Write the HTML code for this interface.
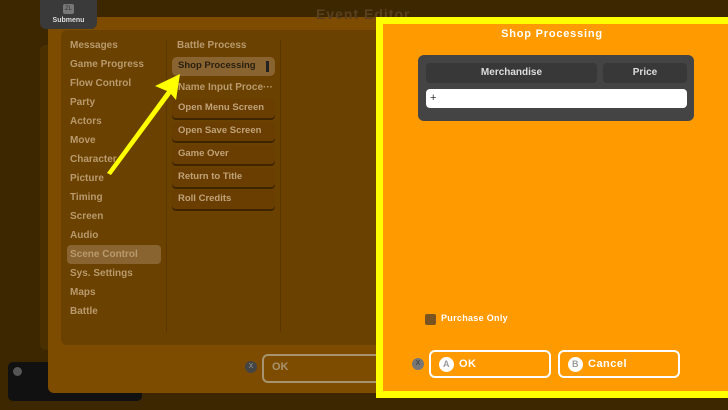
<!DOCTYPE html>
<html><head><meta charset="utf-8"><style>
*{margin:0;padding:0;box-sizing:border-box}
body{width:728px;height:410px;overflow:hidden;background:#3d2700;font-family:"Liberation Sans",sans-serif;position:relative}
.a{position:absolute}
.l{position:absolute;left:70px;font-size:10px;color:#b89a6e;font-weight:bold}
.b{position:absolute;left:172px;width:103px;height:19px;background:#6a3e00;border-radius:4px;box-shadow:0 2px 0 #3e2500;font-size:9.5px;color:#c0a27a;font-weight:bold;padding:3px 6px;white-space:nowrap}
.btn{position:absolute;height:28px;border:2.5px solid #fff;border-radius:6px;color:#fff;font-size:11px;font-weight:bold;padding:4px 8px;display:flex;align-items:center;gap:5px;letter-spacing:.5px}
.c{width:15px;height:15px;border-radius:50%;background:#fff;color:#9a9a9a;font-size:9px;display:flex;align-items:center;justify-content:center}
</style></head><body>
<div class="a" style="left:40px;top:45px;width:30px;height:305px;background:#4a3000;border-radius:6px"></div>
<div class="a" style="left:8px;top:362px;width:134px;height:39px;background:#111;border-radius:5px"></div>
<div class="a" style="left:13px;top:367px;width:9px;height:9px;border-radius:50%;background:#555"></div>
<div class="a" style="left:48px;top:17px;width:340px;height:376px;background:#7e4c00;border-radius:6px"></div>
<div class="a" style="left:316px;top:6px;font-size:14px;color:#5a4020;font-weight:bold;letter-spacing:1px">Event Editor</div>
<div class="a" style="left:40px;top:0;width:57px;height:29px;background:#3a3a3a;border-radius:0 0 6px 6px;color:#ddd;font-size:7px;font-weight:bold;text-align:center;padding-top:17px">Submenu</div>
<div class="a" style="left:63px;top:4px;width:11px;height:10px;background:#777;border-radius:2px;font-size:6px;color:#333;text-align:center;line-height:10px">ZL</div>
<div class="a" style="left:61px;top:30px;width:330px;height:315px;background:#6b4100;border-radius:6px"></div>
<div class="a" style="left:166px;top:40px;width:1px;height:292px;background:#5a3600"></div>
<div class="a" style="left:280px;top:40px;width:1px;height:292px;background:#5a3600"></div>
<div class="a" style="left:67px;top:245px;width:94px;height:19px;background:#8a6430;border-radius:4px"></div>
<div class="l" style="top:40px">Messages</div>
<div class="l" style="top:59px">Game Progress</div>
<div class="l" style="top:78px">Flow Control</div>
<div class="l" style="top:97px">Party</div>
<div class="l" style="top:116px">Actors</div>
<div class="l" style="top:135px">Move</div>
<div class="l" style="top:154px">Character</div>
<div class="l" style="top:173px">Picture</div>
<div class="l" style="top:192px">Timing</div>
<div class="l" style="top:211px">Screen</div>
<div class="l" style="top:230px">Audio</div>
<div class="l" style="top:249px">Scene Control</div>
<div class="l" style="top:268px">Sys. Settings</div>
<div class="l" style="top:287px">Maps</div>
<div class="l" style="top:306px">Battle</div>
<div class="l" style="left:177px;top:40px">Battle Process</div>
<div class="a" style="left:172px;top:57px;width:103px;height:19px;background:#8a6430;border-radius:5px;font-size:9.5px;color:#2a2010;font-weight:bold;padding:3px 6px">Shop Processing</div>
<div class="a" style="left:266px;top:61px;width:3px;height:11px;background:#222"></div>
<div class="l" style="left:178px;top:82px">Name Input Proce···</div>
<div class="b" style="top:99px">Open Menu Screen</div>
<div class="b" style="top:122px">Open Save Screen</div>
<div class="b" style="top:145px">Game Over</div>
<div class="b" style="top:168px">Return to Title</div>
<div class="b" style="top:190px">Roll Credits</div>
<svg class="a" style="left:0;top:0" width="200" height="200"><polygon points="107,173 167,91 155,86 180,74 176,100 171,94 111,175" fill="#ffff00"/></svg>
<div class="a" style="left:245px;top:361px;width:12px;height:12px;border-radius:50%;background:#444;font-size:7px;color:#999;text-align:center;line-height:12px">X</div>
<div class="a" style="left:262px;top:354px;width:130px;height:29px;border:2px solid #a8936f;border-radius:6px;color:#a8936f;font-size:11px;font-weight:bold;padding:5px 8px">OK</div>
<div class="a" style="left:376px;top:17px;width:352px;height:381px;background:#ffff00"></div>
<div class="a" style="left:383px;top:24px;width:345px;height:367px;background:#ff9a00"></div>
<div class="a" style="left:376px;top:28px;width:352px;text-align:center;color:#fff;font-size:11px;font-weight:bold;letter-spacing:.8px">Shop Processing</div>
<div class="a" style="left:418px;top:55px;width:276px;height:66px;background:#444;border-radius:6px"></div>
<div class="a" style="left:426px;top:63px;width:171px;height:20px;background:#383838;border-radius:4px;color:#ddd;font-size:10px;font-weight:bold;text-align:center;line-height:20px">Merchandise</div>
<div class="a" style="left:603px;top:63px;width:84px;height:20px;background:#383838;border-radius:4px;color:#ddd;font-size:10px;font-weight:bold;text-align:center;line-height:20px">Price</div>
<div class="a" style="left:426px;top:89px;width:261px;height:19px;background:#fff;border-radius:4px;font-size:11px;color:#333;padding:3px 4px;line-height:13px">+</div>
<div class="a" style="left:425px;top:314px;width:11px;height:11px;background:#7a5420;border-radius:2px"></div>
<div class="a" style="left:441px;top:313px;color:#fff;font-size:9px;font-weight:bold;letter-spacing:.3px">Purchase Only</div>
<div class="a" style="left:412px;top:358px;width:12px;height:12px;border-radius:50%;background:#777;font-size:7px;color:#333;text-align:center;line-height:12px">X</div>
<div class="btn" style="left:429px;top:350px;width:122px"><span class="c">A</span>OK</div>
<div class="btn" style="left:558px;top:350px;width:122px"><span class="c">B</span>Cancel</div>
</body></html>
